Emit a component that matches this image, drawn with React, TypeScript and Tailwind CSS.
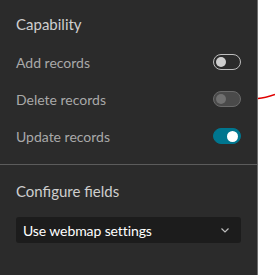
import React from "react";

function Toggle({ state }: { state: "off" | "disabled" | "on" }) {
  if (state === "on") {
    return (
      <div className="w-[28px] h-[16px] rounded-full bg-[#00768f] border border-[#00768f] flex items-center justify-end px-[2px]">
        <div className="w-[11px] h-[11px] rounded-full bg-white" />
      </div>
    );
  }
  if (state === "disabled") {
    return (
      <div className="w-[28px] h-[16px] rounded-full bg-[#4a4a4a] border border-[#6a6a6a] flex items-center px-[2px]">
        <div className="w-[10px] h-[10px] rounded-full bg-[#707070]" />
      </div>
    );
  }
  return (
    <div className="w-[28px] h-[16px] rounded-full bg-[#2b2b2b] border border-[#bdbdbd] flex items-center px-[2px]">
      <div className="w-[10px] h-[10px] rounded-full bg-[#cfcfcf]" />
    </div>
  );
}

function Row({ label, state }: { label: string; state: "off" | "disabled" | "on" }) {
  return (
    <div className="flex items-center justify-between h-[36px]">
      <span className="text-[14px] text-[#a9a9a9]">{label}</span>
      <Toggle state={state} />
    </div>
  );
}

export default function App() {
  return (
    <div
      className="flex w-[275px] h-[275px] bg-white"
      style={{ fontFamily: 'Lato, "Open Sans", sans-serif' }}
    >
      <div className="w-[258px] h-full bg-[#2b2b2b] border-r border-[#6e6e6e] flex flex-col">
        <div className="px-[16px] pt-[12px]">
          <div className="text-[15px] text-[#cfcfcf] h-[24px] leading-[24px]">Capability</div>
          <div className="mt-[8px] flex flex-col gap-[1px]">
            <Row label="Add records" state="off" />
            <Row label="Delete records" state="disabled" />
            <Row label="Update records" state="on" />
          </div>
        </div>
        <div className="mt-[10px] border-t border-[#5c5c5c]" />
        <div className="px-[16px] pt-[15px]">
          <div className="text-[15px] text-[#cfcfcf] h-[22px] leading-[22px]">Configure fields</div>
          <div className="mt-[15px] h-[26px] rounded-[3px] bg-[#1c1c1c] flex items-center justify-between pl-[7px] pr-[12px]">
            <span className="text-[14px] text-white tracking-[-0.1px]">Use webmap settings</span>
            <svg width="8" height="5" viewBox="0 0 8 5" fill="none">
              <path d="M0.5 0.5 L4 4 L7.5 0.5" stroke="#bdbdbd" strokeWidth="1.2" />
            </svg>
          </div>
        </div>
      </div>
      <div className="flex-1 relative">
        <svg className="absolute inset-0" width="17" height="275" viewBox="0 0 17 275">
          <path d="M0 98.5 Q7 98 17 94.5" stroke="#e00000" strokeWidth="1.4" fill="none" />
        </svg>
      </div>
    </div>
  );
}
